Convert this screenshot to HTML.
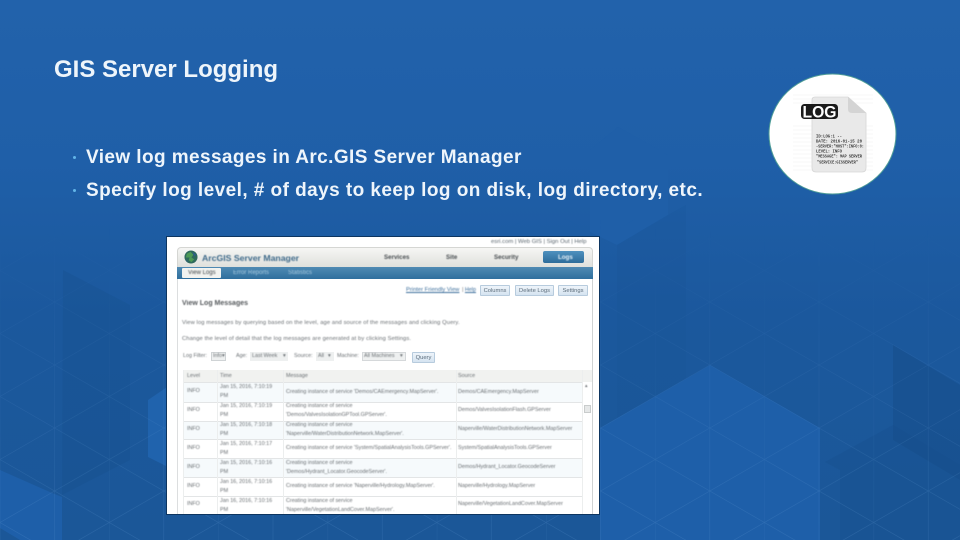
<!DOCTYPE html>
<html lang="en">
<head>
<meta charset="utf-8">
<title>GIS Server Logging</title>
<style>
html,body{margin:0;padding:0}
body{width:960px;height:540px;overflow:hidden;position:relative;background:#1d5ca3;font-family:"Liberation Sans",sans-serif}
#bg{position:absolute;left:0;top:0}
.t{position:absolute;color:#eef5fb;font-weight:bold;white-space:nowrap}
.b{position:absolute;width:3px;height:3px;border-radius:50%;background:#62b5e8}
#shot{position:absolute;left:166px;top:236px;width:434px;height:279px;background:#fff;overflow:hidden;outline:1px solid #0d3560;outline-offset:-1px}
#shot>div{position:absolute}
.s{position:absolute;white-space:nowrap;font-size:5.4px;color:#6a6f73;filter:blur(.4px);line-height:7px}
.btn{position:absolute;background:linear-gradient(#eef4fa,#d5e3f0);border:1px solid #b7cbdd;border-radius:1px;box-sizing:border-box;color:#5c6d7c;font-size:5.8px;text-align:center;filter:blur(.3px)}
.hl{position:absolute;left:17px;width:399px;height:1px;background:#e3e5e6}
.vl{position:absolute;top:134px;width:1px;height:144px;background:#eceeee}
</style>
</head>
<body>
<svg id="bg" width="960" height="540" viewBox="0 0 960 540" xmlns="http://www.w3.org/2000/svg">
  <defs>
    <linearGradient id="g" x1="0" y1="0" x2="0" y2="1">
      <stop offset="0" stop-color="#2262ab"/>
      <stop offset=".3" stop-color="#1f5fa8"/>
      <stop offset=".58" stop-color="#1b589d"/>
      <stop offset="1" stop-color="#1b5798"/>
    </linearGradient>
    <pattern id="p" patternUnits="userSpaceOnUse" x="0" y="18.5" width="109.2" height="63">
      <path d="M0 0L109.2 63M0 63L109.2 0M0 0V63M54.6 0V63" stroke="#6fa5dc" stroke-width=".6" fill="none"/>
    </pattern>
    <linearGradient id="f" x1="0" y1="0" x2="0" y2="1">
      <stop offset=".4" stop-color="#fff" stop-opacity="0"/>
      <stop offset=".65" stop-color="#fff" stop-opacity=".1"/>
      <stop offset="1" stop-color="#fff" stop-opacity=".22"/>
    </linearGradient>
    <mask id="m"><rect width="960" height="540" fill="url(#f)"/></mask>
  </defs>
  <rect width="960" height="540" fill="url(#g)"/>
  <polygon points="590,150 618,127 668,155 668,215 617,245 590,232" fill="#1f5fa8"/>
  <polygon points="617,245 668,215 686,205 686,395 617,420" fill="#174e8c" opacity=".1"/>
  <polygon points="600,428 710,365 820,428 820,540 600,540" fill="#1e5fa9"/>
  <polygon points="63,270 130,305 130,460 62,495" fill="#174e8c" opacity=".3"/>
  <polygon points="0,470 52,493 62,497 62,540 20,540 0,528" fill="#1e5fa9"/>
  <polygon points="148,400 170,385 170,468 148,457" fill="#2063ad"/>
  <polygon points="893,345 960,385 960,480 893,440" fill="#174c88" opacity=".45"/>
  <polygon points="825,462 893,425 960,465 960,540 840,540 840,470" fill="#174e8c" opacity=".3"/>
  <rect width="960" height="540" fill="url(#p)" mask="url(#m)"/>
</svg>

<div class="t" style="left:54px;top:56px;font-size:24px;line-height:28px">GIS Server Logging</div>
<div class="b" style="left:73px;top:156px"></div>
<div class="t" style="left:86px;top:147px;font-size:19px;line-height:22px;letter-spacing:.41px">View log messages in Arc.GIS Server Manager</div>
<div class="b" style="left:73px;top:189px"></div>
<div class="t" style="left:86px;top:180px;font-size:19px;line-height:22px;letter-spacing:.44px">Specify log level, # of days to keep log on disk, log directory, etc.</div>

<svg style="position:absolute;left:760px;top:65px" width="150" height="135" viewBox="760 65 150 135" xmlns="http://www.w3.org/2000/svg">
  <ellipse cx="832.5" cy="134" rx="63.5" ry="60" fill="#fff" stroke="#4d9c96" stroke-width="1"/>
  <g stroke="#f0f0f0" stroke-width=".6">
    <path d="M793 95H873M793 99H873M793 103H873M793 126H873M793 130H873M793 134H873M793 138H873M793 142H873M793 146H873M793 150H873M793 154H873M793 158H873M793 162H873M793 166H873M793 170H873"/>
  </g>
  <path d="M815 97H848L866 113V168Q866 172 862 172H816Q812 172 812 168V100Q812 97 815 97Z" fill="#e9e9e9" stroke="#d6d6d6" stroke-width=".8"/>
  <path d="M848 97L866 113H852Q848 113 848 109Z" fill="#d4d4d4"/>
  <rect x="801" y="104" width="37" height="15" rx="3.5" fill="#1b1b1b"/>
  <text x="819.5" y="117.5" font-family="Liberation Sans, sans-serif" font-size="17" font-weight="bold" fill="#fff" text-anchor="middle" textLength="34" lengthAdjust="spacingAndGlyphs">LOG</text>
  <g font-family="Liberation Mono, monospace" font-size="4.2" fill="#3a3a3a" font-weight="bold">
    <text x="816" y="137.5" textLength="26" lengthAdjust="spacingAndGlyphs">ID:LOG:1 --</text>
    <text x="816" y="142.5" textLength="46" lengthAdjust="spacingAndGlyphs">DATE: 2016-01-15 20</text>
    <text x="816" y="147.5" textLength="48" lengthAdjust="spacingAndGlyphs">-SERVER:"HOST":INFO:0:</text>
    <text x="816" y="152.5" textLength="26" lengthAdjust="spacingAndGlyphs">LEVEL: INFO</text>
    <text x="816" y="157.5" textLength="46" lengthAdjust="spacingAndGlyphs">"MESSAGE": MAP SERVER</text>
    <text x="817" y="163.5" textLength="41" lengthAdjust="spacingAndGlyphs">"SERVICE:GISSERVER"</text>
  </g>
</svg>

<div id="shot">
  <!-- header -->
  <div style="left:11px;top:11px;width:416px;height:20px;border-radius:4px 4px 0 0;background:linear-gradient(#f6f6f4,#dfe0dc);border:1px solid #d5d6d3;border-bottom:0;box-sizing:border-box"></div>
  <div style="left:11px;top:31px;width:416px;height:12px;background:linear-gradient(#4f8ab3,#2f6f9d)"></div>
  <div style="left:11px;top:43px;width:1px;height:235px;background:#dcdedf"></div>
  <div style="left:426px;top:43px;width:1px;height:235px;background:#cfd2d3"></div>
  <svg style="position:absolute;left:18px;top:14px" width="14" height="14" viewBox="0 0 15 15"><circle cx="7.5" cy="7.5" r="7" fill="#2f6a5c"/><path d="M3 4L7 2L10 5L8 8L11 10L8 13L5 11L6 8L2 8Z" fill="#4d9a55"/><path d="M9 2L13 5L11 7ZM2 10L5 13L3 12Z" fill="#2d5d8e"/></svg>
  <div class="s" style="left:36px;top:16px;font-size:8.7px;line-height:12px;font-weight:bold;color:#3f6a8a">ArcGIS Server Manager</div>
  <div class="s" style="left:325px;top:2.5px;font-size:5.9px;color:#5d6870">esri.com | Web GIS | Sign Out | Help</div>
  <div class="s" style="left:218px;top:18px;font-size:6.2px;font-weight:bold;color:#4a4f52">Services</div>
  <div class="s" style="left:280px;top:18px;font-size:6.2px;font-weight:bold;color:#4a4f52">Site</div>
  <div class="s" style="left:328px;top:18px;font-size:6.2px;font-weight:bold;color:#4a4f52">Security</div>
  <div style="left:377px;top:15px;width:41px;height:12px;border-radius:2px;background:linear-gradient(#4f91be,#2d6c9a)"></div>
  <div class="s" style="left:392px;top:18px;font-size:6.2px;font-weight:bold;color:#e8f1f7">Logs</div>
  <div style="left:16px;top:32px;width:39px;height:10px;border-radius:1px;background:#f2f3f0"></div>
  <div class="s" style="left:22px;top:33.5px;font-size:6px;color:#3f4549">View Logs</div>
  <div class="s" style="left:67px;top:33.5px;font-size:6px;color:#a9cbe0">Error Reports</div>
  <div class="s" style="left:122px;top:33.5px;font-size:6px;color:#a9cbe0">Statistics</div>

  <!-- toolbar -->
  <div class="s" style="left:240px;top:51px;font-size:5.8px;color:#3d6f9c;text-decoration:underline">Printer Friendly View</div>
  <div class="s" style="left:296px;top:51px;font-size:5.4px;color:#3d6f9c"><span style="color:#777">|</span> <u>Help</u></div>
  <div class="btn" style="left:314px;top:49px;width:30px;height:11px;line-height:10px">Columns</div>
  <div class="btn" style="left:349px;top:49px;width:39px;height:11px;line-height:10px">Delete Logs</div>
  <div class="btn" style="left:392px;top:49px;width:30px;height:11px;line-height:10px">Settings</div>

  <div class="s" style="left:16px;top:63.5px;font-size:7px;line-height:8px;font-weight:bold;color:#55595c">View Log Messages</div>
  <div class="s" style="left:16px;top:84px;font-size:5.75px;letter-spacing:.12px">View log messages by querying based on the level, age and source of the messages and clicking Query.</div>
  <div class="s" style="left:16px;top:100px;font-size:5.75px;letter-spacing:.12px">Change the level of detail that the log messages are generated at by clicking Settings.</div>

  <!-- filter -->
  <div class="s" style="left:17px;top:117px">Log Filter:</div>
  <div style="left:45px;top:116px;width:15px;height:9px;background:#eef0f0;border:1px solid #cfd3d5;box-sizing:border-box"></div>
  <div class="s" style="left:47px;top:117px">Info</div>
  <div class="s" style="left:56px;top:117px">▾</div>
  <div class="s" style="left:70px;top:117px">Age:</div>
  <div style="left:84px;top:116px;width:38px;height:9px;background:#eef0f0"></div>
  <div class="s" style="left:86px;top:117px">Last Week</div>
  <div class="s" style="left:117px;top:117px">▾</div>
  <div class="s" style="left:128px;top:117px">Source:</div>
  <div style="left:150px;top:116px;width:18px;height:9px;background:#eef0f0"></div>
  <div class="s" style="left:152px;top:117px">All</div>
  <div class="s" style="left:162px;top:117px">▾</div>
  <div class="s" style="left:171px;top:117px">Machine:</div>
  <div style="left:196px;top:116px;width:44px;height:9px;background:#eef0f0;border:1px solid #d5d8da;box-sizing:border-box"></div>
  <div class="s" style="left:198px;top:117px">All Machines</div>
  <div class="s" style="left:234px;top:117px">▾</div>
  <div class="btn" style="left:246px;top:116px;width:23px;height:11px;line-height:10px">Query</div>

  <!-- table -->
  <div style="left:17px;top:134px;width:409px;height:12px;background:#f1f2f0"></div>
  <div style="left:17px;top:146px;width:399px;height:20px;background:#f6fafc"></div>
  <div style="left:17px;top:185px;width:399px;height:18px;background:#f6fafc"></div>
  <div style="left:17px;top:222px;width:399px;height:19px;background:#f6fafc"></div>
  <div class="hl" style="top:146px"></div>
  <div class="hl" style="top:166px"></div>
  <div class="hl" style="top:185px"></div>
  <div class="hl" style="top:203px"></div>
  <div class="hl" style="top:222px"></div>
  <div class="hl" style="top:241px"></div>
  <div class="hl" style="top:260px"></div>
  <div class="vl" style="left:51px"></div>
  <div class="vl" style="left:117px"></div>
  <div class="vl" style="left:290px"></div>
  <div class="vl" style="left:17px"></div>
  <div class="vl" style="left:416px"></div>
  <div class="s" style="left:21px;top:137px">Level</div>
  <div class="s" style="left:54px;top:137px">Time</div>
  <div class="s" style="left:120px;top:137px">Message</div>
  <div class="s" style="left:292px;top:137px">Source</div>

  <div class="s" style="left:21px;top:152px">INFO</div>
  <div class="s" style="left:54px;top:148px">Jan 15, 2016, 7:10:19</div><div class="s" style="left:54px;top:157px">PM</div>
  <div class="s" style="left:120px;top:152.5px">Creating instance of service 'Demos/CAEmergency.MapServer'.</div>
  <div class="s" style="left:292px;top:152.5px">Demos/CAEmergency.MapServer</div>

  <div class="s" style="left:21px;top:171px">INFO</div>
  <div class="s" style="left:54px;top:167px">Jan 15, 2016, 7:10:19</div><div class="s" style="left:54px;top:176px">PM</div>
  <div class="s" style="left:120px;top:167px">Creating instance of service</div><div class="s" style="left:120px;top:176px">'Demos/ValvesIsolationGPTool.GPServer'.</div>
  <div class="s" style="left:292px;top:171px">Demos/ValvesIsolationFlash.GPServer</div>

  <div class="s" style="left:21px;top:190px">INFO</div>
  <div class="s" style="left:54px;top:186px">Jan 15, 2016, 7:10:18</div><div class="s" style="left:54px;top:195px">PM</div>
  <div class="s" style="left:120px;top:186px">Creating instance of service</div><div class="s" style="left:120px;top:195px">'Naperville/WaterDistributionNetwork.MapServer'.</div>
  <div class="s" style="left:292px;top:190px">Naperville/WaterDistributionNetwork.MapServer</div>

  <div class="s" style="left:21px;top:209px">INFO</div>
  <div class="s" style="left:54px;top:205px">Jan 15, 2016, 7:10:17</div><div class="s" style="left:54px;top:214px">PM</div>
  <div class="s" style="left:120px;top:209px">Creating instance of service 'System/SpatialAnalysisTools.GPServer'.</div>
  <div class="s" style="left:292px;top:209px">System/SpatialAnalysisTools.GPServer</div>

  <div class="s" style="left:21px;top:228px">INFO</div>
  <div class="s" style="left:54px;top:224px">Jan 15, 2016, 7:10:16</div><div class="s" style="left:54px;top:233px">PM</div>
  <div class="s" style="left:120px;top:224px">Creating instance of service</div><div class="s" style="left:120px;top:233px">'Demos/Hydrant_Locator.GeocodeServer'.</div>
  <div class="s" style="left:292px;top:228px">Demos/Hydrant_Locator.GeocodeServer</div>

  <div class="s" style="left:21px;top:247px">INFO</div>
  <div class="s" style="left:54px;top:243px">Jan 16, 2016, 7:10:16</div><div class="s" style="left:54px;top:252px">PM</div>
  <div class="s" style="left:120px;top:247px">Creating instance of service 'Naperville/Hydrology.MapServer'.</div>
  <div class="s" style="left:292px;top:247px">Naperville/Hydrology.MapServer</div>

  <div class="s" style="left:21px;top:265px">INFO</div>
  <div class="s" style="left:54px;top:262px">Jan 16, 2016, 7:10:16</div><div class="s" style="left:54px;top:270.5px">PM</div>
  <div class="s" style="left:120px;top:262px">Creating instance of service</div><div class="s" style="left:120px;top:270.5px">'Naperville/VegetationLandCover.MapServer'.</div>
  <div class="s" style="left:292px;top:265px">Naperville/VegetationLandCover.MapServer</div>

  <!-- scrollbar -->
  <div class="s" style="left:419px;top:147px;font-size:5px">▴</div>
  <div style="left:418px;top:169px;width:7px;height:8px;background:#e6e8e8;border:1px solid #c9cccc;box-sizing:border-box"></div>
</div>
</body>
</html>
